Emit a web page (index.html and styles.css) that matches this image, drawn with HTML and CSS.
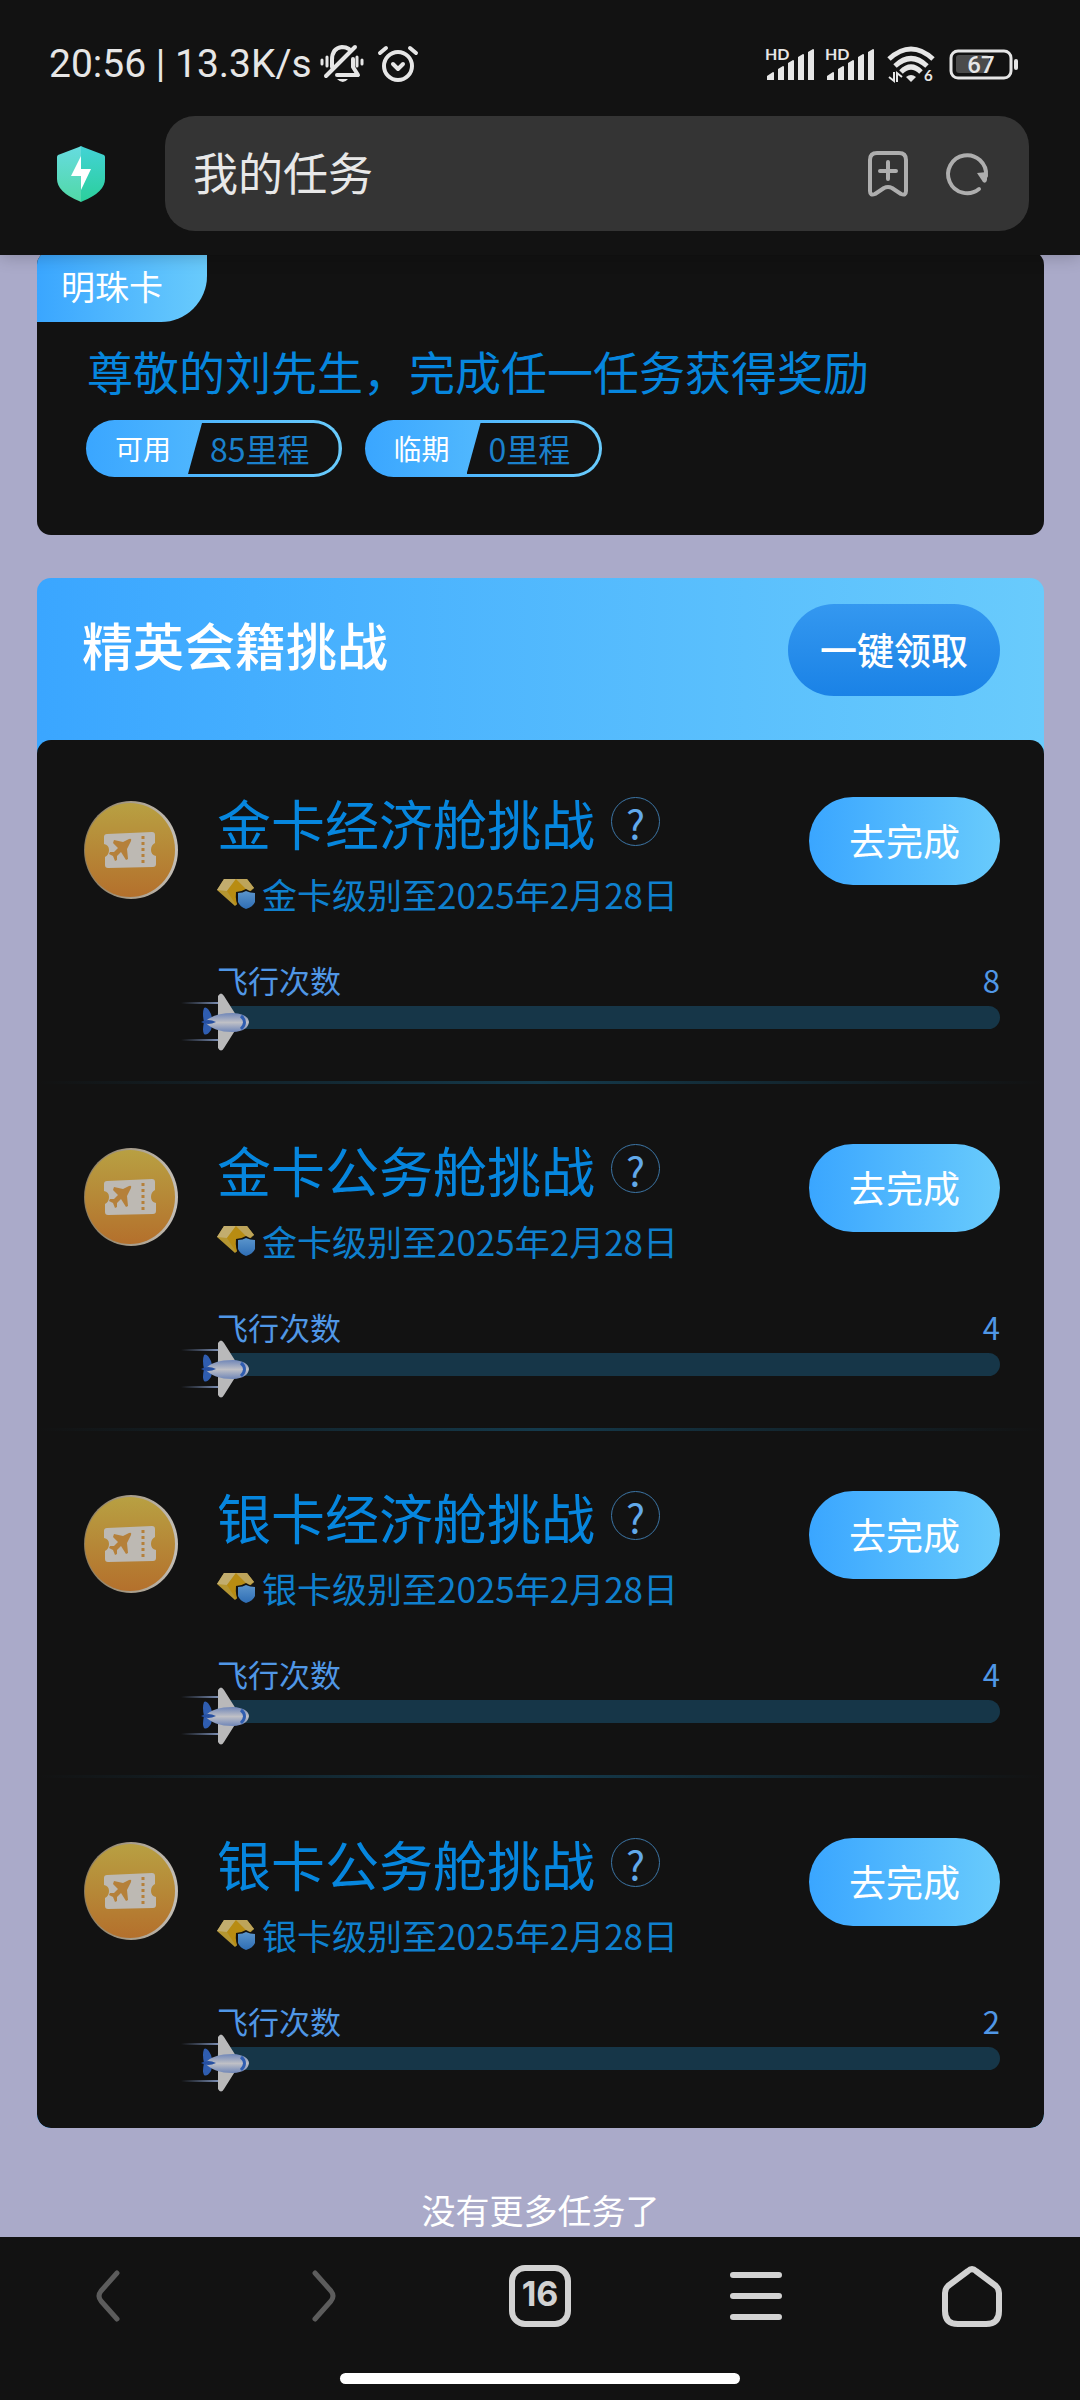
FILE: index.html
```html
<!DOCTYPE html>
<html lang="zh-CN">
<head>
    <meta charset="UTF-8">
    <meta name="viewport" content="width=device-width, initial-scale=1">
    <title>我的任务</title>
    <link rel="stylesheet" href="styles.css">
</head>
<body>

    <!-- shared icons -->
    <svg class="sprite" aria-hidden="true">
        <defs>
            <linearGradient id="coin" x1="0" y1="0" x2="0" y2="1">
                <stop offset="0" stop-color="#b8a042"/>
                <stop offset="1" stop-color="#b4702c"/>
            </linearGradient>
            <linearGradient id="rim" x1="0" y1="0" x2="1" y2="0">
                <stop offset="0" stop-color="#8a7a5c"/>
                <stop offset="1" stop-color="#c4bfb8"/>
            </linearGradient>
            <linearGradient id="guard" x1="0" y1="0" x2="0" y2="1">
                <stop offset="0" stop-color="#5b95cc"/>
                <stop offset="1" stop-color="#2e6db4"/>
            </linearGradient>
            <linearGradient id="hull" x1="0" y1="0" x2="0" y2="1">
                <stop offset="0" stop-color="#6f86b8"/>
                <stop offset="0.5" stop-color="#bfc0c6"/>
                <stop offset="1" stop-color="#6f86b8"/>
            </linearGradient>
            <linearGradient id="trail" x1="0" y1="0" x2="1" y2="0">
                <stop offset="0" stop-color="#6c82ab" stop-opacity="0"/>
                <stop offset="1" stop-color="#7c8fb4"/>
            </linearGradient>
        </defs>
        <symbol id="ticket" viewBox="0 0 94 98">
            <ellipse cx="47" cy="49" rx="47" ry="49" fill="url(#rim)"/>
            <ellipse cx="46" cy="49" rx="45" ry="47" fill="url(#coin)"/>
            <path d="M23 33l45-2q3 0 3 3v8q-4 2-4 7t5 6v8q0 3-3 3l-45 1q-3 0-3-3v-8q4-2 4-7t-5-6v-7q0-3 3-3z" fill="#bdb9b3"/>
            <path d="M30 39l9 2 6-3q3-1 2 2l-4 8 1 10-2 1-5-8-4 4v4l-2 1-2-5-4-2 1-2h4l4-4-5-5z" fill="#b5803a"/>
            <path d="M59 35v27" stroke="#b5803a" stroke-width="3" stroke-dasharray="3 3"/>
        </symbol>
        <symbol id="gem" viewBox="0 0 38 30">
            <path d="M7 0h23l7 9-19 18L0 11z" fill="#b59632"/>
            <path d="M7 0h12l-9 12-10-1z" fill="#c2ad6e"/>
            <path d="M19 0l12 12-12 14-9-14z" fill="#b88c12"/>
            <path d="M30 0l7 9-6 3-12-12z" fill="#bda45a"/>
            <path d="M19 13q5 0 10-3 4 3 9 3v16H22q-4-6-3-16z" fill="#121212"/>
            <path d="M21 14q5 0 8-2 4 2 9 2v9q-2 5-9 7-6-2-8-7z" fill="url(#guard)"/>
        </symbol>
        <symbol id="plane" viewBox="0 0 68 58">
            <path d="M0 9h38v2H0zM0 46h38v2H0z" fill="url(#trail)"/>
            <path d="M23 15q3-2 7 6l2 8-2 8q-4 6-7 4-2-3 0-12-2-9 0-14z" fill="#2f5db0"/>
            <path d="M37 3q3-5 6 0l12 19v14L43 55q-3 5-6 0z" fill="#b9b9ba"/>
            <path d="M24 29q8-9 28-9 15 1 16 9-1 9-16 10-20 0-28-10z" fill="url(#hull)"/>
            <path d="M60 23q7 6 0 13" fill="none" stroke="#2f5db0" stroke-width="3"/>
            <path d="M20 29q7-4 15 0-8 4-15 0z" fill="#2650a2"/>
        </symbol>
        <symbol id="signal" viewBox="0 0 50 34">
            <path d="M2 33v-4l6-4q1 0 1 1v7zM13 33V22l5-3q1 0 1 1v13zM23 33V16l5-3q1 0 1 1v19zM33 33V10l5-3q1 0 1 1v25zM43 33V5l5-3q1 0 1 1v30z" fill="#e6e6e6"/>
        </symbol>
    </svg>

    <header class="top">
        <div class="status">
            <span class="clock">20:56 | 13.3K/s</span>
            <svg class="bell" width="44" height="38" viewBox="0 0 44 38" fill="none" stroke="#e6e6e6" stroke-width="4" stroke-linecap="round">
                <path d="M12 22V15q0-12 10-13 4 0 7 2M33 14v8l5 8H17" stroke-linejoin="round"/>
                <path d="M6 31L35 2"/>
                <path d="M2 15v4M7 12v9M37 12v9M42 15v4" stroke-width="3"/>
                <path d="M17 34h11q-5 6-11 0z" fill="#e6e6e6" stroke="none"/>
            </svg>
            <svg class="alarm" width="40" height="38" viewBox="0 0 40 38" fill="none" stroke="#e6e6e6" stroke-width="4" stroke-linecap="round" stroke-linejoin="round">
                <circle cx="20" cy="21" r="14"/>
                <path d="M15 19l5 5 5-5M2 8l6-5M38 8l-6-5"/>
            </svg>
            <div class="status-right">
                <svg width="50" height="34"><use href="#signal"/><text x="0" y="13" class="hd">HD</text></svg>
                <svg width="50" height="34"><use href="#signal"/><text x="0" y="13" class="hd">HD</text></svg>
                <svg class="wifi" width="46" height="36" viewBox="0 0 46 36" fill="none" stroke="#e6e6e6" stroke-width="5">
                    <path d="M1 13q22-20 44 0M7 20q16-15 32 0M13 26q10-10 20 0"/>
                    <path d="M18 31q5-4 10 0l-5 5z" fill="#e6e6e6" stroke="none"/>
                    <path d="M6 26v9l-5-4M9 36v-9l5 4" stroke-width="2"/>
                    <text x="36" y="35" class="tiny">6</text>
                </svg>
                <svg class="battery" width="69" height="30" viewBox="0 0 69 30">
                    <rect x="2" y="2" width="60" height="27" rx="7" fill="none" stroke="#e6e6e6" stroke-width="3"/>
                    <rect x="7" y="6" width="33" height="18" rx="3" fill="#4b4b4b"/>
                    <rect x="65" y="10" width="4" height="11" rx="2" fill="#e6e6e6"/>
                    <text x="32" y="24" text-anchor="middle" class="charge">67</text>
                </svg>
            </div>
        </div>
        <div class="address">
            <svg class="shield" width="48" height="56" viewBox="0 0 48 56">
                <defs>
                    <linearGradient id="s1" x1="0" y1="0" x2="0" y2="1">
                        <stop offset="0" stop-color="#66dce0"/>
                        <stop offset="1" stop-color="#51d8a6"/>
                    </linearGradient>
                    <linearGradient id="s2" x1="0" y1="0" x2="0" y2="1">
                        <stop offset="0" stop-color="#43d3d6"/>
                        <stop offset="1" stop-color="#2bcf9b"/>
                    </linearGradient>
                </defs>
                <path d="M24 0l-2 1L1 9q-1 1-1 2v22q0 13 22 22l2 1z" fill="url(#s1)"/>
                <path d="M24 0l2 1 21 8q1 1 1 2v22q0 13-22 22l-2 1z" fill="url(#s2)"/>
                <path d="M24 10v13h10L24 44V30h-10z" fill="#fff"/>
            </svg>
            <div class="search">
                <input type="text" value="我的任务" aria-label="地址栏">
                <button class="icon-btn" aria-label="收藏">
                    <svg width="40" height="46" viewBox="0 0 40 46" fill="none" stroke="#aeaeae" stroke-width="4" stroke-linecap="round" stroke-linejoin="round">
                        <path d="M2 9q0-7 7-7h22q7 0 7 7v31q0 5-5 3l-9-6q-4-2-8 0l-9 6q-5 2-5-3z"/>
                        <path d="M20 11v17M12 20h16"/>
                    </svg>
                </button>
                <button class="icon-btn" aria-label="刷新">
                    <svg width="42" height="44" viewBox="0 0 42 44">
                        <path d="M33 37A19 19 0 1 1 40 24" fill="none" stroke="#aeaeae" stroke-width="4" stroke-linecap="round"/>
                        <path d="M31 21l10-1v8q-1 4-4 2z" fill="#aeaeae"/>
                    </svg>
                </button>
            </div>
        </div>
    </header>

    <main>
        <section class="card member">
            <span class="level">明珠卡</span>
            <h1>尊敬的刘先生，完成任一任务获得奖励</h1>
            <div class="miles">
                <div class="pill"><span class="pill-name">可用</span><span class="pill-value">85里程</span></div>
                <div class="pill"><span class="pill-name">临期</span><span class="pill-value">0里程</span></div>
            </div>
        </section>

        <section class="card challenge">
            <div class="challenge-head">
                <h2>精英会籍挑战</h2>
                <button class="claim">一键领取</button>
            </div>
            <ul class="tasks">
                <li class="task">
                    <svg class="badge"><use href="#ticket"/></svg>
                    <div class="task-body">
                        <div class="task-top">
                            <div>
                                <h3>金卡经济舱挑战 <button class="help" aria-label="说明">?</button></h3>
                                <p class="reward"><svg class="gem"><use href="#gem"/></svg>金卡级别至2025年2月28日</p>
                            </div>
                            <button class="go">去完成</button>
                        </div>
                        <div class="count"><span>飞行次数</span><span>8</span></div>
                        <div class="bar"><svg class="plane"><use href="#plane"/></svg></div>
                    </div>
                </li>
                <li class="task">
                    <svg class="badge"><use href="#ticket"/></svg>
                    <div class="task-body">
                        <div class="task-top">
                            <div>
                                <h3>金卡公务舱挑战 <button class="help" aria-label="说明">?</button></h3>
                                <p class="reward"><svg class="gem"><use href="#gem"/></svg>金卡级别至2025年2月28日</p>
                            </div>
                            <button class="go">去完成</button>
                        </div>
                        <div class="count"><span>飞行次数</span><span>4</span></div>
                        <div class="bar"><svg class="plane"><use href="#plane"/></svg></div>
                    </div>
                </li>
                <li class="task">
                    <svg class="badge"><use href="#ticket"/></svg>
                    <div class="task-body">
                        <div class="task-top">
                            <div>
                                <h3>银卡经济舱挑战 <button class="help" aria-label="说明">?</button></h3>
                                <p class="reward"><svg class="gem"><use href="#gem"/></svg>银卡级别至2025年2月28日</p>
                            </div>
                            <button class="go">去完成</button>
                        </div>
                        <div class="count"><span>飞行次数</span><span>4</span></div>
                        <div class="bar"><svg class="plane"><use href="#plane"/></svg></div>
                    </div>
                </li>
                <li class="task">
                    <svg class="badge"><use href="#ticket"/></svg>
                    <div class="task-body">
                        <div class="task-top">
                            <div>
                                <h3>银卡公务舱挑战 <button class="help" aria-label="说明">?</button></h3>
                                <p class="reward"><svg class="gem"><use href="#gem"/></svg>银卡级别至2025年2月28日</p>
                            </div>
                            <button class="go">去完成</button>
                        </div>
                        <div class="count"><span>飞行次数</span><span>2</span></div>
                        <div class="bar"><svg class="plane"><use href="#plane"/></svg></div>
                    </div>
                </li>
            </ul>
        </section>

        <p class="no-more">没有更多任务了</p>
    </main>

    <footer class="bottom">
        <nav>
            <button class="dim" aria-label="后退">
                <svg width="62" height="62" viewBox="0 0 62 62"><path d="M40 8L24 26q-4 5 0 10l16 18"/></svg>
            </button>
            <button class="dim" aria-label="前进">
                <svg width="62" height="62" viewBox="0 0 62 62"><path d="M22 8l16 18q4 5 0 10L22 54"/></svg>
            </button>
            <button class="tabs" aria-label="标签页">16</button>
            <button aria-label="菜单">
                <svg width="62" height="62" viewBox="0 0 62 62"><path d="M8 10h46M8 31h46M8 52h46"/></svg>
            </button>
            <button aria-label="主页">
                <svg width="62" height="62" viewBox="0 0 62 62"><path d="M27 6q4-4 8 0l20 15q3 3 3 7v18q0 13-13 13H17Q4 59 4 46V28q0-4 3-7z"/></svg>
            </button>
        </nav>
        <div class="handle"></div>
    </footer>

</body>
</html>
```

FILE: styles.css
```css
* {
    box-sizing: border-box;
}

body {
    margin: 0;
    min-height: 100vh;
    display: flex;
    flex-direction: column;
    background-color: #aaaac9;
    font-family: "Noto Sans CJK SC", sans-serif;
    color: #fff;
}

h1, h2, h3, p, ul {
    margin: 0;
    padding: 0;
    font-weight: 400;
}

button {
    padding: 0;
    border: none;
    background: none;
    color: #fff;
    font-family: inherit;
    cursor: pointer;
}

svg {
    display: block;
    flex: none;
    overflow: visible;
}

.sprite {
    position: absolute;
    width: 0;
    height: 0;
}

/* status bar and address bar */
.top {
    position: relative;
    z-index: 1;
    background-color: #121212;
    box-shadow: 0 2px 16px rgba(0, 0, 0, 0.2);
}

.status {
    display: flex;
    align-items: center;
    padding: 40px 62px 28px 49px;
    line-height: 48px;
}

.clock {
    font-family: Roboto, sans-serif;
    font-size: 39px;
    color: #e6e6e6;
}

.bell {
    margin-left: 8px;
}

.alarm {
    margin-left: 14px;
}

.status-right {
    display: flex;
    align-items: center;
    gap: 10px;
    margin-left: auto;
}

.wifi {
    margin-left: 3px;
}

.battery {
    margin-left: 5px;
}

.hd {
    font: 700 16px Lato, sans-serif;
    fill: #e6e6e6;
}

.tiny {
    font: 700 15px Lato, sans-serif;
    fill: #e6e6e6;
    stroke: none;
}

.charge {
    font: 500 24px Roboto, sans-serif;
    fill: #e6e6e6;
}

.address {
    display: flex;
    align-items: center;
    gap: 60px;
    padding: 0 51px 24px 57px;
}

.search {
    flex: 1;
    display: flex;
    align-items: center;
    gap: 38px;
    height: 115px;
    padding: 0 41px 0 28px;
    border-radius: 30px;
    background-color: #343434;
}

.search input {
    flex: 1;
    min-width: 0;
    padding: 0 0 4px;
    border: none;
    outline: none;
    background: none;
    color: #e8e8e8;
    font-family: inherit;
    font-size: 45px;
}

/* cards */
main {
    flex: 1;
    margin-top: -4px;
    padding: 0 36px 0 37px;
}

.card {
    border-radius: 14px;
    background-color: #121212;
    overflow: hidden;
}

.member {
    padding-bottom: 58px;
}

.level {
    display: inline-block;
    vertical-align: top;
    padding: 0 44px 2px 24px;
    border-bottom-right-radius: 46px;
    background-image: linear-gradient(to right, #3aa6ff, #69cbfc);
    font-size: 34px;
    line-height: 69px;
}

.member h1 {
    margin: 20px 0 22px 50px;
    font-size: 46px;
    line-height: 56px;
    color: #0686de;
}

.miles {
    display: flex;
    gap: 23px;
    margin-left: 49px;
}

.pill {
    display: flex;
    padding: 3px;
    border-radius: 29px;
    background-image: linear-gradient(to right, #3aa6ff, #69cbfc);
    line-height: 51px;
}

.pill-name {
    padding: 0 17px 0 26px;
    font-size: 28px;
}

.pill-value {
    padding: 0 29px 0 22px;
    border-radius: 0 26px 26px 0;
    background-color: #121212;
    clip-path: polygon(14px 0, 100% 0, 100% 100%, 0 100%);
    font-size: 32px;
    color: #1a80cc;
}

.challenge {
    margin-top: 43px;
    background-image: linear-gradient(to right, #3aa6ff, #69cbfc);
}

.challenge-head {
    display: flex;
    justify-content: space-between;
    padding: 26px 44px 44px 45px;
}

.challenge-head h2 {
    font-size: 51px;
    font-weight: 500;
    line-height: 80px;
}

.claim {
    height: 92px;
    padding: 0 32px 3px;
    border-radius: 46px;
    background-image: linear-gradient(#3498f0, #1a82e6);
    font-size: 37px;
    font-weight: 500;
}

.tasks {
    list-style: none;
    border-radius: 14px;
    background-color: #121212;
}

.task {
    position: relative;
    display: flex;
    gap: 39px;
    padding: 57px 44px 58px 47px;
}

.task:not(:last-child)::after {
    content: "";
    position: absolute;
    left: 0;
    right: 0;
    bottom: 3px;
    height: 3px;
    background-image: linear-gradient(to right, transparent, #143a4c, transparent);
}

.badge {
    width: 94px;
    height: 98px;
    margin-top: 4px;
}

.task-body {
    flex: 1;
}

.task-top {
    display: flex;
    justify-content: space-between;
    align-items: flex-start;
}

.task h3 {
    display: flex;
    gap: 16px;
    height: 58px;
    font-size: 54px;
    line-height: 52px;
    color: #0686de;
}

.help {
    width: 49px;
    height: 49px;
    border: 1px solid #3c75a5;
    border-radius: 50%;
    font-size: 40px;
    line-height: 44px;
    color: #62a9ea;
}

.reward {
    display: flex;
    align-items: center;
    gap: 7px;
    margin-top: 14px;
    font-size: 35px;
    line-height: 50px;
    color: #0f80ce;
}

.gem {
    width: 38px;
    height: 30px;
}

.go {
    height: 88px;
    padding: 0 40px 3px;
    border-radius: 44px;
    background-image: linear-gradient(to right, #3aa6ff, #69cbfc);
    font-size: 37px;
}

.count {
    display: flex;
    justify-content: space-between;
    margin-top: 41px;
    font-size: 31px;
    line-height: 40px;
    color: #5097e6;
}

.bar {
    position: relative;
    height: 23px;
    margin-top: 6px;
    border-radius: 12px;
    background-color: #163648;
}

/* the plane marks how far the bar has come */
.plane {
    position: absolute;
    left: -36px;
    top: -13px;
    width: 68px;
    height: 58px;
}

.no-more {
    margin-top: 57px;
    font-size: 34px;
    line-height: 50px;
    text-align: center;
}

/* browser toolbar */
.bottom {
    padding: 28px 0 16px;
    background-color: #121212;
}

.bottom nav {
    display: grid;
    grid-template-columns: repeat(5, 1fr);
    justify-items: center;
}

.bottom path {
    fill: none;
    stroke: #d2d2d2;
    stroke-width: 6;
    stroke-linecap: round;
    stroke-linejoin: round;
}

.bottom .dim path {
    stroke: #5c5c5c;
    stroke-width: 5;
}

.tabs {
    width: 62px;
    height: 62px;
    padding-bottom: 4px;
    border: 6px solid #d2d2d2;
    border-radius: 16px;
    font-family: Inter, sans-serif;
    font-size: 34px;
    font-weight: 700;
    line-height: 46px;
    color: #d2d2d2;
}

.handle {
    width: 37%;
    height: 11px;
    margin: 46px auto 0;
    border-radius: 6px;
    background-color: #fff;
}
```
